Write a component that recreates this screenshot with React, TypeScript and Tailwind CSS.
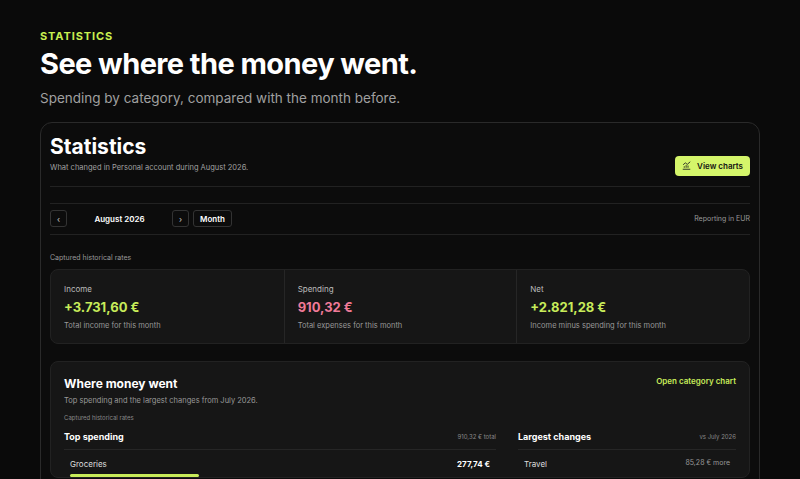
import React from "react";

export default function App() {
  return (
    <div className="min-h-[479px] w-[800px] overflow-hidden bg-[#0a0a0a] text-white" style={{ fontFamily: "Inter, 'Liberation Sans', sans-serif" }}>
      <div className="px-10 pt-[28px]">
        <div className="text-[11px] font-bold tracking-[0.08em] text-[#c8f050]">STATISTICS</div>
        <div className="mt-[1px] text-[29px] font-bold leading-[36px] tracking-[-0.02em]">See where the money went.</div>
        <div className="mt-[6px] text-[13.5px] text-[#a0a0a0]">Spending by category, compared with the month before.</div>
        <div className="mt-[14px] h-[400px] rounded-[12px] border border-[#2a2a2a] bg-[#0c0c0c] px-[9px] pt-[10px]">
          <div className="flex items-start justify-between">
            <div>
              <div className="text-[21px] font-bold leading-[28px]">Statistics</div>
              <div className="mt-[1px] text-[7.5px] text-[#a0a0a0]">What changed in Personal account during August 2026.</div>
            </div>
            <button className="mt-[23px] flex h-[20px] items-center gap-[6px] rounded-[4px] bg-[#d4f56a] px-[7px] text-[8px] font-semibold text-[#111]">
              <svg width="9" height="9" viewBox="0 0 12 12" fill="none" stroke="#222" strokeWidth="1.2"><path d="M1 11h10M3 9V7M5.5 9V5.5M8 9V6M1.5 5l3-2.5 2.5 2 4-3.5" /></svg>
              View charts
            </button>
          </div>
          <div className="mt-[10px] h-[18px] border-y border-[#222]" />
          <div className="flex h-[31px] items-center justify-between border-b border-[#222] text-[8px]">
            <div className="flex items-center">
              <div className="flex h-[17px] w-[17px] items-center justify-center rounded-[3px] border border-[#333] text-[#ccc]">‹</div>
              <div className="w-[105px] text-center font-semibold">August 2026</div>
              <div className="flex h-[17px] w-[17px] items-center justify-center rounded-[3px] border border-[#333] text-[#ccc]">›</div>
              <div className="ml-[4px] flex h-[17px] items-center rounded-[3px] border border-[#333] px-[6px] font-semibold">Month</div>
            </div>
            <div className="text-[7px] text-[#999]">Reporting in EUR</div>
          </div>
          <div className="mt-[18px] text-[7px] text-[#999]">Captured historical rates</div>
          <div className="mt-[6px] grid h-[75px] grid-cols-3 rounded-[8px] border border-[#222] bg-[#161616]">
            {[
              ["Income", "+3.731,60 €", "Total income for this month", "text-[#c8ec5a]"],
              ["Spending", "910,32 €", "Total expenses for this month", "text-[#f07a98]"],
              ["Net", "+2.821,28 €", "Income minus spending for this month", "text-[#c8ec5a]"],
            ].map(([l, v, s, c], i) => (
              <div key={l} className={`px-[13px] pt-[13px] ${i > 0 ? "border-l border-[#262626]" : ""}`}>
                <div className="text-[8px] text-[#bbb]">{l}</div>
                <div className={`mt-[3px] text-[13px] font-bold ${c}`}>{v}</div>
                <div className="mt-[2px] text-[7.5px] text-[#999]">{s}</div>
              </div>
            ))}
          </div>
          <div className="mt-[17px] rounded-[8px] border border-[#222] bg-[#161616] px-[13px] pt-[13px]">
            <div className="flex justify-between">
              <div className="text-[12px] font-bold">Where money went</div>
              <div className="text-[8px] font-semibold text-[#c8ec5a]">Open category chart</div>
            </div>
            <div className="mt-[2px] text-[7.5px] text-[#999]">Top spending and the largest changes from July 2026.</div>
            <div className="mt-[6px] text-[6px] text-[#888]">Captured historical rates</div>
            <div className="mt-[8px] grid grid-cols-[1fr_218px] gap-[22px]">
              <div>
                <div className="flex items-center justify-between border-b border-[#262626] pb-[6px]">
                  <div className="text-[9px] font-bold">Top spending</div>
                  <div className="text-[6px] text-[#888]">910,32 € total</div>
                </div>
                <div className="flex justify-between px-[6px] pt-[8px] text-[8px]">
                  <span className="text-[#ddd]">Groceries</span><span className="font-bold">277,74 €</span>
                </div>
                <div className="ml-[6px] mt-[4px] h-[3px] w-[129px] rounded bg-[#c8ec5a]" />
              </div>
              <div>
                <div className="flex items-center justify-between border-b border-[#262626] pb-[6px]">
                  <div className="text-[9px] font-bold">Largest changes</div>
                  <div className="text-[6px] text-[#888]">vs July 2026</div>
                </div>
                <div className="flex justify-between px-[6px] pt-[8px] text-[8px]">
                  <span className="text-[#ddd]">Travel</span><span className="text-[7px] text-[#999]">85,28 € more</span>
                </div>
              </div>
            </div>
          </div>
        </div>
      </div>
    </div>
  );
}
